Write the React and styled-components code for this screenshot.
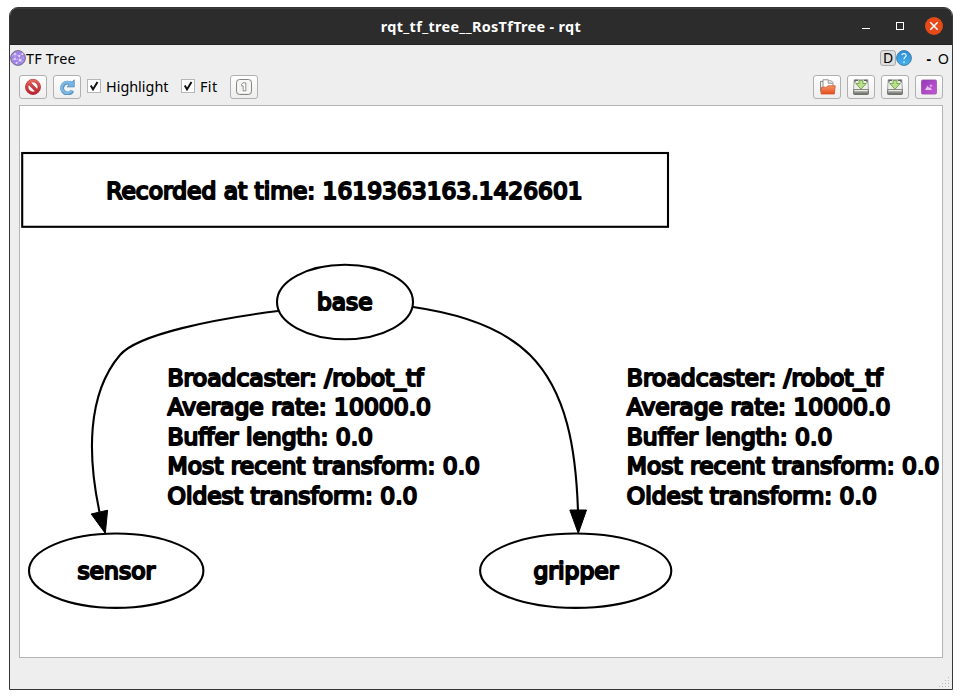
import React from "react";
import styled, { createGlobalStyle } from "styled-components";

const GlobalStyle = createGlobalStyle`
  * { box-sizing: border-box; }
  body { margin: 0; background: #fff; font-family: "Noto Sans", "Open Sans", sans-serif; color: #000; overflow: hidden; }
`;

const Desktop = styled.div`
  width: 962px;
  height: 699px;
  padding: 7px 9px 9px;
`;

const Window = styled.main`
  width: 944px;
  height: 683px;
  display: flex;
  flex-direction: column;
  border: 1px solid #353535;
  border-radius: 9px 9px 0 0;
  background: #eeeeee;
  overflow: hidden;
`;

const TitleBar = styled.header`
  flex: none;
  height: 37px;
  display: grid;
  grid-template-columns: 1fr auto 1fr;
  align-items: center;
  background: #2c2c2c;
  border-top: 1px solid #3b3b3b;
  border-bottom: 1px solid #222;
`;

const Title = styled.h1`
  grid-column: 2;
  margin: 0;
  font-size: 14.4px;
  line-height: 20px;
  font-weight: 700;
  letter-spacing: ${(p) => p.$spacing}px;
  color: #fff;
  white-space: nowrap;
`;

const WindowControls = styled.div`
  justify-self: end;
  display: flex;
  align-items: center;
  padding-right: 8px;

  svg { display: block; }
`;

const DockHeader = styled.div`
  flex: none;
  height: 30px;
  display: flex;
  align-items: center;
  padding: 0 3px 3px 0;
  font-size: 14.4px;
  line-height: 20px;

  svg { display: block; margin-bottom: 1px; }
`;

const DockTitle = styled.span`
  letter-spacing: 0.2px;
  white-space: nowrap;
`;

const DockActions = styled.div`
  margin-left: auto;
  display: flex;
  align-items: center;
`;

const DetachButton = styled.button`
  width: 16px;
  height: 16px;
  margin-bottom: 1px;
  padding: 0;
  border: 1px solid #aaa;
  border-radius: 3px;
  background: #dedede;
  font: 14px/14px "Noto Sans", sans-serif;
  color: #000;
`;

const DockGlyph = styled.span`
  width: ${(p) => p.$width}px;
  text-align: right;
  font-weight: ${(p) => p.$weight || 400};
`;

const Toolbar = styled.div`
  flex: none;
  height: 30px;
  display: flex;
  align-items: flex-start;
  padding: 0 9px;
`;

const ToolGroup = styled.div`
  display: flex;
  gap: 6px;
  margin-left: ${(p) => p.$offset || "0"};
`;

const ToolButton = styled.button`
  width: 28px;
  height: 24px;
  display: grid;
  place-items: center;
  padding: 0;
  border: 1px solid #b0b0b0;
  border-radius: 3px;
  background: linear-gradient(#fefefe, #eeeeee);

  svg { display: block; }
`;

const CheckOption = styled.label`
  height: 24px;
  width: ${(p) => p.$width}px;
  margin-left: 6px;
  padding-bottom: 2px;
  display: flex;
  align-items: center;
  gap: 5px;
  font-size: 14.4px;
  letter-spacing: ${(p) => p.$spacing}px;
  white-space: nowrap;
`;

const CheckBox = styled.span`
  flex: none;
  width: 14px;
  height: 14px;
  border: 1px solid #b6b6b6;
  background: #fff;

  svg { display: block; }
`;

const GraphView = styled.section`
  flex: none;
  width: 924px;
  height: 553px;
  margin-left: 9px;
  border: 1px solid #b4b4b4;
  background: #fff;

  svg { display: block; }
`;

const GraphText = styled.text`
  font: 23.4px "DejaVu Sans", sans-serif;
  fill: #000;
  stroke: #000;
  stroke-width: 2.1px;
  stroke-linejoin: round;
`;

const StatusBar = styled.footer`
  flex: 1;
  display: flex;
  justify-content: flex-end;
  align-items: flex-end;

  svg { display: block; }
`;

const TreeIcon = () => (
  <svg width="16" height="16" viewBox="0 0 16 16">
    <circle cx="8" cy="8" r="7.4" fill="#a184e6" stroke="#777187" />
    <path d="M2 6l3-2 4 2 4-3M5 4v5l5 1 3 2M9 6l1 4-4 4M2 10l3-1M10 10l4-3" stroke="#c5b1f7" fill="none" strokeWidth=".8" />
    <g fill="#e4dbff">
      <circle cx="5" cy="4" r="1.1" /><circle cx="9.2" cy="6" r="1.1" /><circle cx="4.8" cy="9" r="1.1" />
      <circle cx="10.2" cy="10.2" r="1.2" /><circle cx="12.5" cy="4" r=".9" /><circle cx="6.5" cy="13" r=".9" />
    </g>
  </svg>
);

const HelpIcon = () => (
  <svg width="16" height="16" viewBox="0 0 16 16">
    <defs><linearGradient id="help" x2="0" y2="1"><stop stopColor="#2b8bd6" /><stop offset="1" stopColor="#45b4ee" /></linearGradient></defs>
    <circle cx="8" cy="8" r="7.4" fill="url(#help)" stroke="#427ba6" />
    <path d="M5.8 5.1c.4-2.2 4.4-2 4.4.3 0 1.7-2.2 1.7-2.2 3.8" stroke="#e9f7ff" strokeWidth="1.2" fill="none" />
    <circle cx="8" cy="12" r=".85" fill="#e9f7ff" />
  </svg>
);

const StopIcon = () => (
  <svg width="16" height="16" viewBox="0 0 16 16">
    <defs><linearGradient id="stop" gradientUnits="userSpaceOnUse" x1="0" y1="0" x2="0" y2="16"><stop stopColor="#ec6f60" /><stop offset=".5" stopColor="#d13d40" /><stop offset="1" stopColor="#b81e34" /></linearGradient></defs>
    <g fill="none">
      <circle cx="8" cy="8" r="6.3" stroke="#b32d35" strokeWidth="3.2" />
      <path d="M3.7 3.7l8.6 8.6" stroke="#b32d35" strokeWidth="3.2" />
      <circle cx="8" cy="8" r="6.3" stroke="url(#stop)" strokeWidth="2.2" />
      <path d="M3.7 3.7l8.6 8.6" stroke="url(#stop)" strokeWidth="2.1" />
    </g>
  </svg>
);

const RefreshIcon = () => (
  <svg width="16" height="16" viewBox="0 0 16 16">
    <path d="M13.4 11.6A5.4 5.4 0 1 1 11.1 4.3" stroke="#568fc0" strokeWidth="4" fill="none" />
    <path d="M8 7.9h7.3V.8l-2.4 2.3-1.7-.8-1.1 3.4z" fill="#74b5e6" stroke="#568fc0" strokeWidth=".8" strokeLinejoin="round" />
    <path d="M12.8 11.3A5.4 5.4 0 1 1 11.9 4.7" stroke="#7db9e6" strokeWidth="2.6" fill="none" />
  </svg>
);

const OneIcon = () => (
  <svg width="16" height="16" viewBox="0 0 16 16">
    <rect x=".5" y=".5" width="15" height="15" rx="3" fill="#e5e5e3" stroke="#868682" />
    <rect x="2" y="1.8" width="12" height="11.8" rx="2" fill="#f3f3f1" stroke="#fff" />
    <path d="M5.6 5.4l1.2-1.5h3v8H7.2v-5H5.6z" fill="#fff" stroke="#777" strokeWidth=".8" />
  </svg>
);

const FolderIcon = () => (
  <svg width="17" height="16" viewBox="0 0 17 16">
    <path d="M1.5 12.9V2.4h3.2" fill="#f3f3f1" stroke="#858581" />
    <path d="M4 11V.8h5.3l1.1 1.1h1.9l1.6 1.7V9" fill="#fff" stroke="#8e8e8a" />
    <path d="M9.2 1v3.3h4.5" fill="#e2e2df" stroke="#999" />
    <defs><linearGradient id="folder" x2="0" y2="1"><stop stopColor="#f79668" /><stop offset="1" stopColor="#e34c18" /></linearGradient></defs>
    <path d="M2 15l.6-6.8h5.3l1-1.4h7.3l-.8 8.2z" fill="url(#folder)" stroke="#d8562b" strokeWidth=".8" />
  </svg>
);

const SaveIcon = () => (
  <svg width="16" height="16" viewBox="0 0 16 16">
    <defs><linearGradient id="drive" x2="0" y2="1"><stop stopColor="#deded9" /><stop offset="1" stopColor="#5c5e58" /></linearGradient></defs>
    <path d="M1.2.8h13.6l.7 10.2H.5z" fill="#ededeb" stroke="#92928e" strokeWidth=".8" />
    <path d="M2 3.5V1.4h3M14 3.5V1.4h-3" fill="none" stroke="#5f615b" strokeWidth="1.2" />
    <rect x=".5" y="10.5" width="15" height="5" rx=".9" fill="url(#drive)" stroke="#62645e" strokeWidth=".8" />
    <path d="M2 11.4h12" stroke="#efefed" />
    <path d="M6.1 1.5h3.8v3h3.3L8 10.2 2.8 4.5h3.3z" fill="#b9df8b" stroke="#719e48" strokeWidth=".9" />
  </svg>
);

const ImageIcon = () => (
  <svg width="16" height="16" viewBox="0 0 16 16">
    <defs><linearGradient id="image" x2="1" y2="1"><stop stopColor="#943ab7" /><stop offset="1" stopColor="#c657d4" /></linearGradient></defs>
    <rect x=".4" y=".9" width="15.2" height="14.2" rx="1.5" fill="url(#image)" stroke="#9249a6" strokeWidth=".7" />
    <path d="M4 11l2.5-4.2 1.6 2.1.9-.9 2.1 3z" fill="#e6c5ed" />
    <path d="M10 4.8l.6 1.2 1.3.2-1 .8.2 1.2-1.1-.6-1.1.6.2-1.2-.9-.8 1.2-.2z" fill="#d7a6e2" />
  </svg>
);

const Check = () => (
  <CheckBox>
    <svg width="12" height="12" viewBox="0 0 12 12"><path d="M2.8 5.6L5 9.4 9.5 1.9" fill="none" stroke="#111" strokeWidth="2" /></svg>
  </CheckBox>
);

const frames = [
  { name: "base", cx: 345, cy: 302, rx: 68, x: 317, width: 55.5 },
  { name: "sensor", cx: 116.2, cy: 570.7, rx: 87.2, x: 77.4, width: 77.8 },
  { name: "gripper", cx: 575.7, cy: 570.7, rx: 95.6, x: 533.4, width: 85 },
];

const transformLines = [
  ["Broadcaster: /robot_tf", 256],
  ["Average rate: 10000.0", 263.5],
  ["Buffer length: 0.0", 205.5],
  ["Most recent transform: 0.0", 312.5],
  ["Oldest transform: 0.0", 250],
];

const FrameGraph = () => (
  <svg width="922" height="551" viewBox="20 106 922 551">
    <g fill="none" stroke="#000" strokeWidth="2.1">
      <rect x="22.2" y="153" width="645.8" height="73.8" />
      {frames.map((f) => <ellipse key={f.name} cx={f.cx} cy={f.cy} rx={f.rx} ry="37.2" />)}
      <path d="M278 311C215 319 138 334 120 355C86 395 88 458 99.5 512" />
      <path d="M413 307C455 313 501 326 530 355C567 392 576 450 578 511" />
    </g>
    <path d="M91.2 514L107.6 510.2L105.3 533.4ZM569.8 510H586.5L578.3 533.4Z" stroke="#000" />
    <GraphText x="106.3" y="198.5" textLength="476.4" lengthAdjust="spacingAndGlyphs">Recorded at time: 1619363163.1426601</GraphText>
    {frames.map((f) => (
      <GraphText key={f.name} x={f.x} y={f.cy + 8.3} textLength={f.width} lengthAdjust="spacingAndGlyphs">{f.name}</GraphText>
    ))}
    {[167.5, 626.8].map((x) => transformLines.map(([text, width], i) => (
      <GraphText key={x + text} x={x} y={385.6 + i * 29.6} textLength={width} lengthAdjust="spacingAndGlyphs">{text}</GraphText>
    )))}
  </svg>
);

export default function App() {
  return (
    <>
      <GlobalStyle />
      <Desktop>
        <Window>
          <TitleBar>
            <Title $spacing={0.35}>rqt_tf_tree__RosTfTree - rqt</Title>
            <WindowControls>
              <svg width="82" height="20" viewBox="0 0 82 20">
                <path d="M0 11.5h8" stroke="#fff" />
                <rect x="34.5" y="5.5" width="7" height="7" fill="none" stroke="#fff" />
                <circle cx="72" cy="9" r="9" fill="#e54a18" />
                <path d="M68.3 5.3l7.4 7.4m0-7.4l-7.4 7.4" stroke="#fff" strokeWidth="1.5" />
              </svg>
            </WindowControls>
          </TitleBar>
          <DockHeader>
            <TreeIcon />
            <DockTitle>TF Tree</DockTitle>
            <DockActions>
              <DetachButton>D</DetachButton>
              <HelpIcon />
              <DockGlyph $width={19} $weight={700}>-</DockGlyph>
              <DockGlyph $width={18}>O</DockGlyph>
            </DockActions>
          </DockHeader>
          <Toolbar>
            <ToolGroup>
              <ToolButton aria-label="Clear"><StopIcon /></ToolButton>
              <ToolButton aria-label="Refresh"><RefreshIcon /></ToolButton>
            </ToolGroup>
            <CheckOption $width={88} $spacing={0}><Check />Highlight</CheckOption>
            <CheckOption $width={43} $spacing={0.4}><Check />Fit</CheckOption>
            <ToolGroup $offset="6px">
              <ToolButton aria-label="Actual size"><OneIcon /></ToolButton>
            </ToolGroup>
            <ToolGroup $offset="auto">
              <ToolButton aria-label="Open"><FolderIcon /></ToolButton>
              <ToolButton aria-label="Save graph"><SaveIcon /></ToolButton>
              <ToolButton aria-label="Save drawing"><SaveIcon /></ToolButton>
              <ToolButton aria-label="Save image"><ImageIcon /></ToolButton>
            </ToolGroup>
          </Toolbar>
          <GraphView><FrameGraph /></GraphView>
          <StatusBar>
            <svg width="14" height="14" viewBox="0 0 14 14">
              <path d="M10 2.5h1M7 5.5h1m2 0h1M4 8.5h1m2 0h1m2 0h1M1 11.5h1m2 0h1m2 0h1m2 0h1" stroke="#b8b8b8" />
            </svg>
          </StatusBar>
        </Window>
      </Desktop>
    </>
  );
}
